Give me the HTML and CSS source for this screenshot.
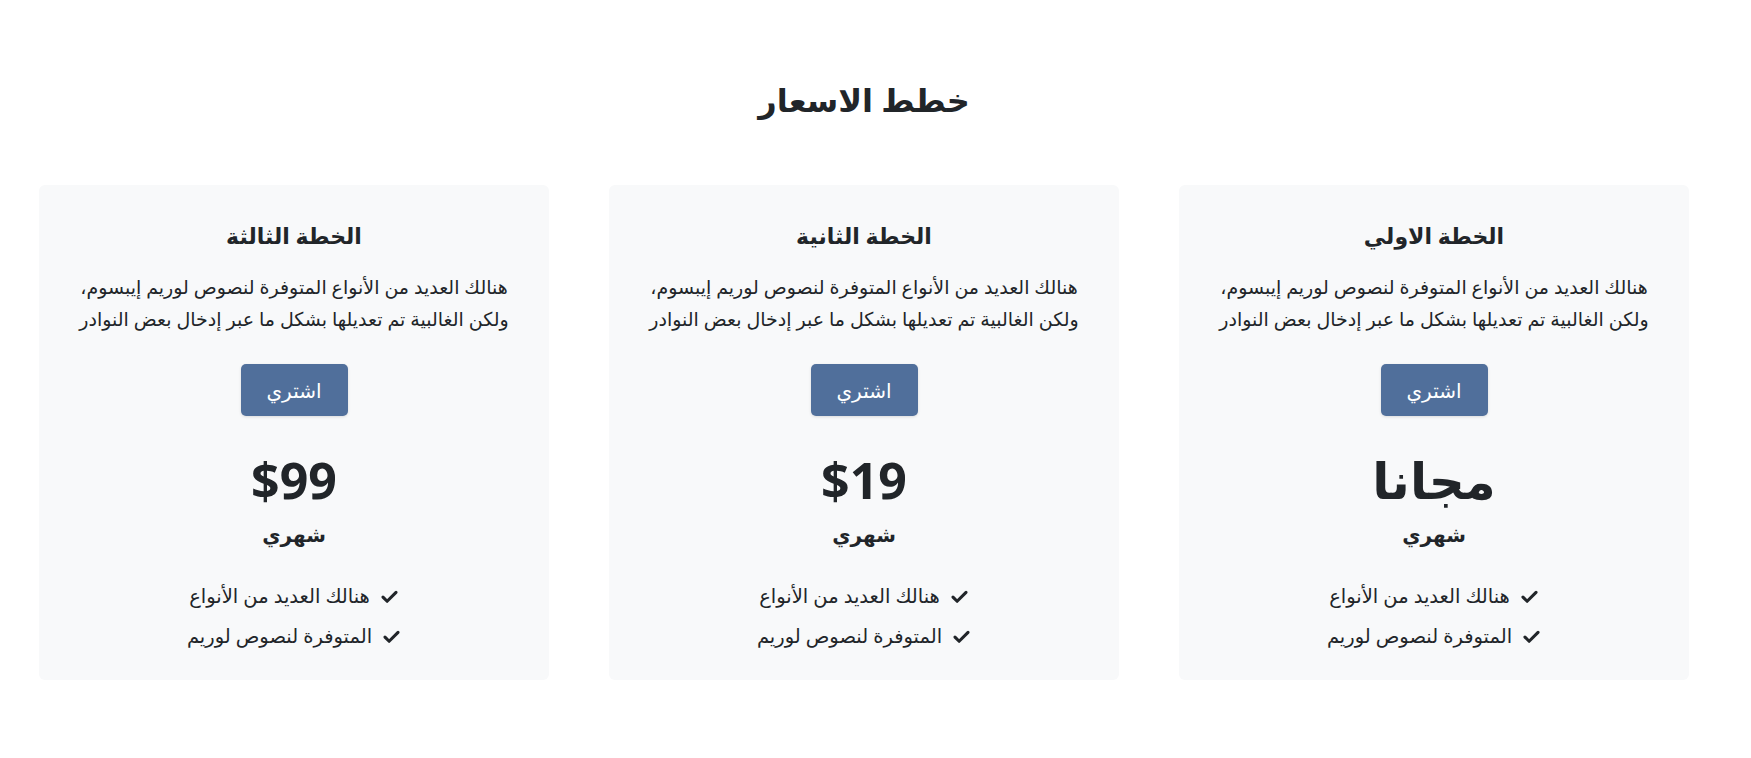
FILE: index.html
```html
<!DOCTYPE html>
<html lang="ar" dir="rtl">
<head>
    <meta charset="UTF-8">
    <meta name="viewport" content="width=device-width, initial-scale=1.0">
    <title>خطط الاسعار</title>
    <link rel="stylesheet" href="styles.css">
</head>
<body>

    <section class="pricing">
        <!-- عنوان القسم -->
        <h2 class="pricing-title">خطط الاسعار</h2>

        <div class="plans">
            <!-- الخطة الاولي -->
            <div class="plan">
                <h3 class="plan-name">الخطة الاولي</h3>
                <p class="plan-desc">هنالك العديد من الأنواع المتوفرة لنصوص لوريم إيبسوم، ولكن الغالبية تم تعديلها بشكل ما عبر إدخال بعض النوادر</p>
                <button class="plan-btn">اشتري</button>
                <div class="plan-price">مجانا</div>
                <div class="plan-period">شهري</div>
                <ul class="plan-features">
                    <li><svg class="check" viewBox="0 0 16 16"><path d="M2.5 8.5l3.5 3.5 7.5-7.5"/></svg>هنالك العديد من الأنواع</li>
                    <li><svg class="check" viewBox="0 0 16 16"><path d="M2.5 8.5l3.5 3.5 7.5-7.5"/></svg>المتوفرة لنصوص لوريم</li>
                </ul>
            </div>

            <!-- الخطة الثانية -->
            <div class="plan">
                <h3 class="plan-name">الخطة الثانية</h3>
                <p class="plan-desc">هنالك العديد من الأنواع المتوفرة لنصوص لوريم إيبسوم، ولكن الغالبية تم تعديلها بشكل ما عبر إدخال بعض النوادر</p>
                <button class="plan-btn">اشتري</button>
                <div class="plan-price">$19</div>
                <div class="plan-period">شهري</div>
                <ul class="plan-features">
                    <li><svg class="check" viewBox="0 0 16 16"><path d="M2.5 8.5l3.5 3.5 7.5-7.5"/></svg>هنالك العديد من الأنواع</li>
                    <li><svg class="check" viewBox="0 0 16 16"><path d="M2.5 8.5l3.5 3.5 7.5-7.5"/></svg>المتوفرة لنصوص لوريم</li>
                </ul>
            </div>

            <!-- الخطة الثالثة -->
            <div class="plan">
                <h3 class="plan-name">الخطة الثالثة</h3>
                <p class="plan-desc">هنالك العديد من الأنواع المتوفرة لنصوص لوريم إيبسوم، ولكن الغالبية تم تعديلها بشكل ما عبر إدخال بعض النوادر</p>
                <button class="plan-btn">اشتري</button>
                <div class="plan-price">$99</div>
                <div class="plan-period">شهري</div>
                <ul class="plan-features">
                    <li><svg class="check" viewBox="0 0 16 16"><path d="M2.5 8.5l3.5 3.5 7.5-7.5"/></svg>هنالك العديد من الأنواع</li>
                    <li><svg class="check" viewBox="0 0 16 16"><path d="M2.5 8.5l3.5 3.5 7.5-7.5"/></svg>المتوفرة لنصوص لوريم</li>
                </ul>
            </div>
        </div>
    </section>

</body>
</html>
```

FILE: styles.css
```css
body {
    font-family: "Noto Sans", "DejaVu Sans", sans-serif;
    margin: 0;
    padding: 0;
    background-color: #fff;
    color: #212529;
}

.pricing {
    padding: 81px 62px 0 39px;
}

.pricing-title {
    text-align: center;
    font-size: 32px;
    font-weight: 700;
    margin: 0 0 66px;
    line-height: 1.2;
}

.plans {
    display: grid;
    grid-template-columns: repeat(3, 1fr);
    gap: 60px;
}

.plan {
    background-color: #f8f9fa;
    border-radius: 6px;
    padding: 34px 26px 24px;
    text-align: center;
    display: flex;
    flex-direction: column;
    align-items: center;
}

.plan-name {
    font-size: 22px;
    font-weight: 700;
    margin: 0 0 19px;
    line-height: 1.5;
}

.plan-desc {
    font-size: 19px;
    line-height: 32px;
    margin: 0 0 29px;
}

.plan-btn {
    font-family: inherit;
    font-size: 20px;
    color: #fff;
    background-color: #506f9b;
    border: none;
    border-radius: 5px;
    padding: 0 24px;
    height: 52px;
    width: 107px;
    box-shadow: 0 1px 3px rgba(0, 0, 0, 0.12);
    cursor: pointer;
}

.plan-price {
    font-size: 50px;
    font-weight: 700;
    line-height: 1.2;
    margin-top: 34px;
}

.plan-period {
    font-size: 20px;
    font-weight: 700;
    line-height: 1.5;
    margin-top: 10px;
}

.plan-features {
    list-style: none;
    padding: 0;
    margin: 26px 0 0;
}

.plan-features li {
    display: flex;
    align-items: center;
    justify-content: center;
    gap: 10px;
    font-size: 19.5px;
    line-height: 40px;
}

.check {
    width: 19px;
    height: 19px;
    fill: none;
    stroke: #212529;
    stroke-width: 2.6;
    stroke-linecap: round;
    stroke-linejoin: round;
}
```
